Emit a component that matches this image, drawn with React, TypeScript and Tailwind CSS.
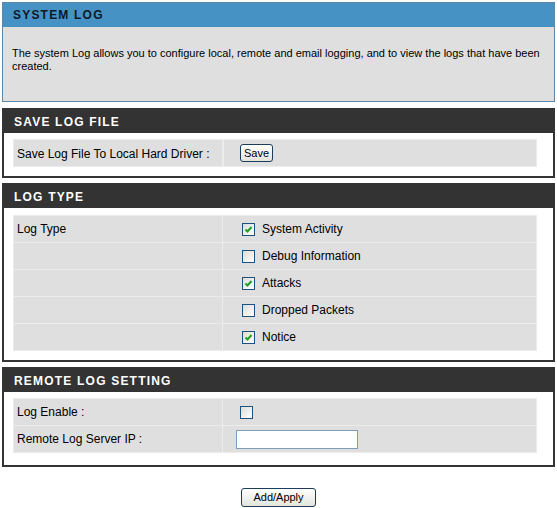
import React from 'react';

const font = { fontFamily: '"Liberation Sans", Arial, sans-serif' };

const CheckBox: React.FC<{ checked?: boolean }> = ({ checked }) => (
  <span className="inline-flex h-[13px] w-[13px] items-center justify-center border border-[#1c5180] bg-gradient-to-br from-[#dcdcd7] to-white">
    {checked && (
      <svg width="9" height="9" viewBox="0 0 9 9">
        <path d="M1.5 4.5 L3.5 6.5 L7.5 2" fill="none" stroke="#21a121" strokeWidth="2" />
      </svg>
    )}
  </span>
);

const SectionHeader: React.FC<{ title: string }> = ({ title }) => (
  <div className="flex h-[23px] items-center bg-[#333333] pl-[10px] text-[12px] font-bold tracking-[1.2px] text-white">
    {title}
  </div>
);

const Cell: React.FC<{ children?: React.ReactNode; className?: string }> = ({ children, className }) => (
  <div className={'flex h-[26px] items-center bg-[#dfdfdf] outline outline-1 outline-[#ececec] ' + (className ?? '')}>
    {children}
  </div>
);

const logTypes = [
  { label: 'System Activity', checked: true },
  { label: 'Debug Information', checked: false },
  { label: 'Attacks', checked: true },
  { label: 'Dropped Packets', checked: false },
  { label: 'Notice', checked: true },
];

export default function App() {
  return (
    <div className="h-[508px] w-[557px] bg-white p-[2px] text-[12px] text-black" style={font}>
      {/* System log intro */}
      <div className="border border-[#5f87a8] bg-[#dfdfdf]">
        <div className="flex h-[24px] items-center bg-[#4692c4] pl-[10px] text-[12px] font-bold tracking-[1.2px] text-[#0d1a26]">
          SYSTEM LOG
        </div>
        <div className="h-[74px] px-[9px] pt-[20px] text-[11px] leading-[13px]">
          The system Log allows you to configure local, remote and email logging, and to view the logs that have been created.
        </div>
      </div>

      {/* Save log file */}
      <div className="mt-[6px] border-2 border-[#333333]">
        <SectionHeader title="SAVE LOG FILE" />
        <div className="pb-[10px] pl-[10px] pr-[17px] pt-[7px]">
          <div className="grid grid-cols-[208px_1fr] gap-[2px]">
            <Cell className="pl-[3px] pt-[2px]">Save Log File To Local Hard Driver :</Cell>
            <Cell className="pl-[16px]">
              <button className="h-[18px] rounded-[3px] border border-[#1c3c5c] bg-gradient-to-b from-white to-[#e4e4dc] px-[3px] text-[11px] leading-none">
                Save
              </button>
            </Cell>
          </div>
        </div>
      </div>

      {/* Log type */}
      <div className="mt-[5px] border-2 border-[#333333]">
        <SectionHeader title="LOG TYPE" />
        <div className="pb-[10px] pl-[10px] pr-[17px] pt-[8px]">
          <div className="grid grid-cols-[208px_1fr] gap-[1px]">
            {logTypes.map((t, i) => (
              <React.Fragment key={t.label}>
                <Cell className="pl-[3px]">{i === 0 ? 'Log Type' : ''}</Cell>
                <Cell className="gap-[7px] pl-[19px]">
                  <CheckBox checked={t.checked} />
                  {t.label}
                </Cell>
              </React.Fragment>
            ))}
          </div>
        </div>
      </div>

      {/* Remote log setting */}
      <div className="mt-[5px] border-2 border-[#333333]">
        <SectionHeader title="REMOTE LOG SETTING" />
        <div className="pb-[13px] pl-[10px] pr-[17px] pt-[7px]">
          <div className="grid grid-cols-[208px_1fr] gap-[1px]">
            <Cell className="pl-[3px]">Log Enable :</Cell>
            <Cell className="pl-[17px]">
              <CheckBox />
            </Cell>
            <Cell className="pl-[3px]">Remote Log Server IP :</Cell>
            <Cell className="pl-[13px]">
              <input className="h-[19px] w-[122px] border border-[#7f9db9] bg-white" />
            </Cell>
          </div>
        </div>
      </div>

      <div className="mt-[21px] flex justify-center">
        <button className="h-[19px] w-[75px] rounded-[3px] border border-[#1c3c5c] bg-gradient-to-b from-white to-[#e4e4dc] text-[11px] leading-none">
          Add/Apply
        </button>
      </div>
    </div>
  );
}
